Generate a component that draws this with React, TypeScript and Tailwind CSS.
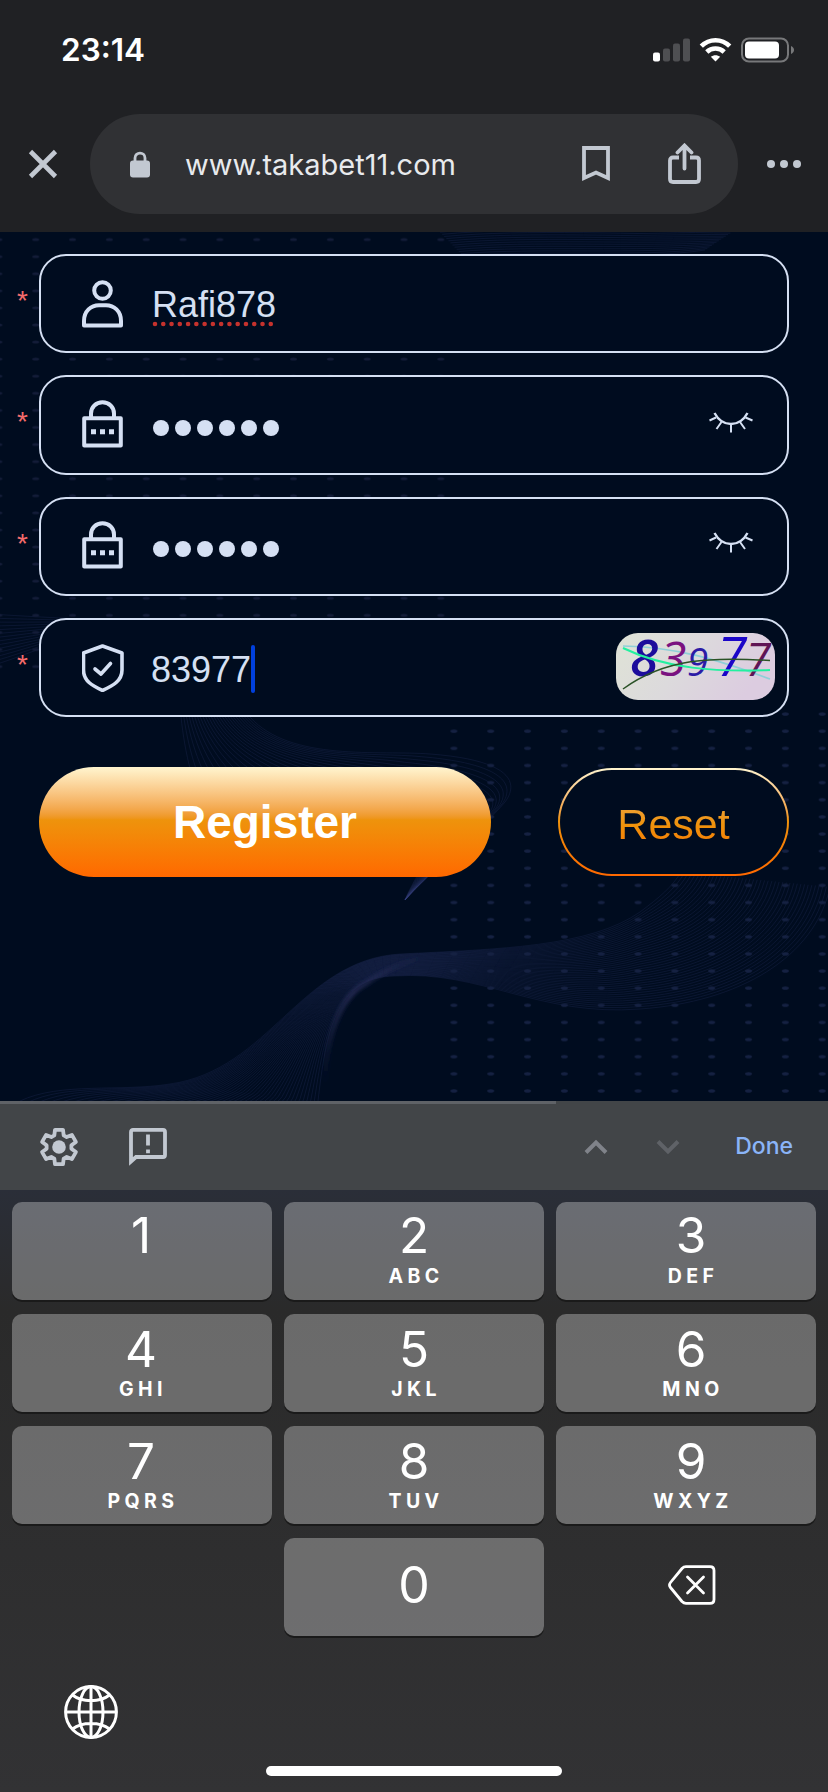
import React from "react";

interface Field {
  id: string;
  icon: React.ReactNode;
  value: React.ReactNode;
  trailing?: React.ReactNode;
  trailingClass?: string;
}

const UserIcon: React.FC = () => (
  <svg width="42" height="48" viewBox="0 0 42 48" fill="none" stroke="#d5e0f3" strokeWidth="4">
    <circle cx="20.5" cy="10.5" r="8.3" />
    <path d="M2 45.5V41C2 31 9 25.3 17 25.3H24C32 25.3 39 31 39 41V45.5Z" strokeLinejoin="round" />
  </svg>
);

const LockIcon: React.FC = () => (
  <svg
    className="-mt-[2px]"
    width="42"
    height="48"
    viewBox="0 0 42 48"
    fill="none"
    stroke="#d5e0f3"
    strokeWidth="4"
  >
    <path d="M9 17V13.5C9 7 14 2.3 20.5 2.3C27 2.3 32 7 32 13.5V17" />
    <path d="M2.2 18.3H38.8V45.5H2.2Z" strokeLinejoin="round" />
    <path d="M9 31.7H14M18 31.7H23M27 31.7H32" strokeWidth="5" />
  </svg>
);

const ShieldIcon: React.FC = () => (
  <svg
    width="42"
    height="48"
    viewBox="0 0 42 48"
    fill="none"
    stroke="#d5e0f3"
    strokeWidth="3.6"
    strokeLinecap="round"
    strokeLinejoin="round"
  >
    <path d="M20.5 2L40 9V26C40 37 31 41.5 20.5 46.5C10 41.5 1.5 37 1.5 26V9Z" />
    <path d="M13 25L19 30L28.5 19.5" />
  </svg>
);

const ClosedEyeIcon: React.FC = () => (
  <svg width="44" height="22" viewBox="0 0 44 22" fill="none" stroke="#d5e0f3" strokeWidth="2">
    <path d="M5.5 1C9 7.5 14.5 12 22 12C29.5 12 35 7.5 38.5 1" strokeWidth="2.4" />
    <path d="M7 5.5L0.5 8.5M12.5 10L7.5 17M22 12V20.5M31 10L36 17M36.5 5.5L43.5 8.5" />
  </svg>
);

const CaptchaImage: React.FC = () => (
  <svg className="overflow-visible" width="159" height="67" viewBox="0 0 159 67">
    <defs>
      <linearGradient id="captchaBg" x1="0" y1="0" x2="1" y2="0.3">
        <stop offset="0" stopColor="#dfe3d6" />
        <stop offset="0.5" stopColor="#dcdadc" />
        <stop offset="1" stopColor="#dccce0" />
      </linearGradient>
    </defs>
    <rect width="159" height="67" rx="22" fill="url(#captchaBg)" />
    <path d="M7 13C60 14 100 26 154 46" fill="none" stroke="#8fd0d8" strokeWidth="1.6" />
    <g fontFamily="'Open Sans', 'Noto Sans', sans-serif" fontStyle="italic">
      <text x="14" y="42.5" fontSize="51" fontWeight="600" fill="#1c0d9c">8</text>
      <text x="44" y="42.5" fontSize="48" fill="#7a1280">3</text>
      <text x="71" y="42.5" fontSize="38.5" fontWeight="500" fill="#2c1ba6">9</text>
      <text x="101" y="43" fontSize="54" fontWeight="500" fill="#1b05c8">7</text>
      <text x="129.500" y="43" fontSize="46" fontWeight="500" fill="#5f1455">7</text>
    </g>
    <path d="M7 15C50 36 100 39 154 37" fill="none" stroke="#23f0a0" strokeWidth="2" />
    <path d="M7 56C50 25 95 24 154 27.5" fill="none" stroke="#2a5226" strokeWidth="1.5" />
  </svg>
);

const MaskedValue: React.FC = () => (
  <span className="flex gap-[6px] pl-[1px] pt-[6px]">
    {[0, 1, 2, 3, 4, 5].map((i) => (
      <span key={i} className="h-4 w-4 rounded-full bg-[#d5e0f3]" />
    ))}
  </span>
);

const FIELDS: Field[] = [
  {
    id: "username",
    icon: <UserIcon />,
    value: (
      <span className="flex flex-col pt-[6px] text-[36px] leading-9">
        Rafi878
        <svg className="-mt-[2px]" width="122" height="6">
          <path
            d="M3 3H122"
            stroke="#c5322d"
            strokeWidth="4.6"
            strokeLinecap="round"
            strokeDasharray="0 8.27"
          />
        </svg>
      </span>
    ),
  },
  {
    id: "password",
    icon: <LockIcon />,
    value: <MaskedValue />,
    trailing: <ClosedEyeIcon />,
    trailingClass: "-mt-[3px]",
  },
  {
    id: "confirm",
    icon: <LockIcon />,
    value: <MaskedValue />,
    trailing: <ClosedEyeIcon />,
    trailingClass: "-mt-[6px]",
  },
  {
    id: "captcha",
    icon: <ShieldIcon />,
    value: (
      <span className="-ml-[1px] flex items-center pt-[2px] text-[36px] leading-[48px]">
        <span className="pt-[2px]">83977</span>
        <span className="h-12 w-1 rounded-sm bg-[#0040dd]" />
      </span>
    ),
    trailing: <CaptchaImage />,
    trailingClass: "-mt-[3px]",
  },
];

const KEYS = [
  ["1", ""],
  ["2", "ABC"],
  ["3", "DEF"],
  ["4", "GHI"],
  ["5", "JKL"],
  ["6", "MNO"],
  ["7", "PQRS"],
  ["8", "TUV"],
  ["9", "WXYZ"],
];

// Interpolates between two cubic paths to get a bundle of thin lines
const blend = (from: number[], to: number[], count: number): string[] =>
  Array.from({ length: count }, (_, i) => {
    const t = i / (count - 1);
    const p = from.map((v, k) => (v + (to[k] - v) * t).toFixed(1));
    let d = `M${p[0]} ${p[1]}`;
    for (let k = 2; k < p.length; k += 6) {
      d += `C${p.slice(k, k + 6).join(" ")}`;
    }
    return d;
  });

const WAVES: string[] = [
  ...blend(
    [20, 869, 60, 850, 120, 860, 170, 852, 270, 838, 300, 728, 400, 722, 500, 717, 590, 715, 640, 680, 660, 665, 672, 655, 681, 640],
    [306, 940, 310, 915, 314, 890, 318, 869, 326, 800, 335, 745, 395, 744, 480, 738, 540, 785, 640, 777, 740, 770, 815, 725, 830, 655],
    42
  ),
  ...blend(
    [181, 485, 185, 520, 192, 560, 215, 590, 290, 610, 440, 590, 430, 620, 420, 640, 410, 655, 405, 668],
    [250, 485, 290, 530, 380, 518, 430, 522, 510, 528, 520, 550, 505, 570, 480, 600, 430, 640, 405, 668],
    26
  ),
  ...blend(
    [438, -2, 520, -10, 640, -5, 735, -2],
    [465, 26, 540, 20, 640, 28, 705, 18],
    14
  ),
  ...blend(
    [-10, 382, 20, 384, 60, 386, 100, 388],
    [-10, 434, 20, 426, 50, 410, 100, 400],
    14
  ),
];

const PageBackground: React.FC = () => (
  <svg className="absolute inset-0" width="828" height="869" viewBox="0 0 828 869">
    <defs>
      <pattern id="dotsLeft" x="-19.5" y="-1" width="36.83" height="17.08" patternUnits="userSpaceOnUse">
        <ellipse cx="18.4" cy="8.5" rx="3.4" ry="1.5" fill="#131c38" />
      </pattern>
      <pattern id="dotsRight" x="435.5" y="473.5" width="36.83" height="17.13" patternUnits="userSpaceOnUse">
        <ellipse cx="18.4" cy="8.5" rx="3.4" ry="1.7" fill="#152142" />
      </pattern>
      <linearGradient id="crest" gradientUnits="userSpaceOnUse" x1="322" y1="850" x2="420" y2="720">
        <stop offset="0" stopColor="#2c3160" stopOpacity="0" />
        <stop offset="0.55" stopColor="#2c3160" />
        <stop offset="1" stopColor="#2c3160" stopOpacity="0" />
      </linearGradient>
      <filter id="soften" x="-20%" y="-20%" width="140%" height="140%">
        <feGaussianBlur stdDeviation="2" />
      </filter>
    </defs>
    <g fill="none" stroke="#39427c" strokeOpacity="0.2" strokeWidth="1">
      {WAVES.map((d, i) => (
        <path key={i} d={d} />
      ))}
    </g>
    <path
      d="M325 850C326 795 345 762 365 752C385 738 400 732 420 726"
      fill="none"
      stroke="url(#crest)"
      strokeWidth="4"
      filter="url(#soften)"
    />
    <rect width="450" height="440" fill="url(#dotsLeft)" />
    <rect x="436" y="474" width="392" height="395" fill="url(#dotsRight)" />
  </svg>
);

const StatusBar: React.FC = () => (
  <div className="flex h-[100px] items-center justify-between pl-[61px] pr-[34px] font-['Inter',sans-serif] text-white">
    <span className="text-[31.5px] font-semibold">23:14</span>
    <svg width="141" height="26" viewBox="0 0 141 26">
      <rect x="0" y="15.5" width="7" height="9" rx="2" fill="#fff" />
      <g fill="#4e4f52">
        <rect x="10" y="11.5" width="7" height="13" rx="2" />
        <rect x="20" y="6.5" width="7" height="18" rx="2" />
        <rect x="30" y="1.5" width="7" height="23" rx="2" />
      </g>
      <g fill="none" stroke="#fff" strokeWidth="4.6">
        <path d="M48.3 9.2C56.3 1.2 68.7 1.2 76.7 9.2" />
        <path d="M53.8 15C58.5 10.4 66.5 10.4 71.2 15" />
      </g>
      <path d="M62.5 24.5L57.8 19.8C60.5 17.6 64.5 17.6 67.2 19.8Z" fill="#fff" />
      <rect x="89" y="1.5" width="46" height="23" rx="7" fill="none" stroke="#77787a" strokeWidth="2" />
      <rect x="92" y="4.5" width="34" height="17" rx="4" fill="#fff" />
      <path d="M138 9C142 10.5 142 15.5 138 17Z" fill="#77787a" />
    </svg>
  </div>
);

const BrowserBar: React.FC = () => (
  <div className="flex items-center pl-7 pt-[14px]">
    <svg className="shrink-0" width="30" height="30" viewBox="0 0 30 30" stroke="#c2c8d1" strokeWidth="4.6">
      <path d="M2.5 2.5L27.5 27.5M27.5 2.5L2.5 27.5" />
    </svg>
    <div className="ml-8 flex h-[100px] w-[648px] shrink-0 items-center rounded-full bg-[#303134] pl-10 pr-[37px]">
      <svg width="20" height="27" viewBox="0 0 20 27">
        <path d="M5 11V7C5 0.5 15 0.5 15 7V11" fill="none" stroke="#c2c8d1" strokeWidth="2.8" />
        <rect y="9.5" width="20" height="17" rx="3" fill="#c2c8d1" />
      </svg>
      <span className="ml-[35px] grow pt-[2px] font-['Inter',sans-serif] text-[29px] text-[#e8eaed]">
        www.takabet11.com
      </span>
      <svg width="28" height="36" viewBox="0 0 28 36" fill="none" stroke="#c2c8d1" strokeWidth="3.8">
        <path d="M2 2H26V32L14 26.5L2 32Z" />
      </svg>
      <svg
        className="ml-[58px]"
        width="33"
        height="42"
        viewBox="0 0 33 42"
        fill="none"
        stroke="#c2c8d1"
        strokeWidth="3.8"
      >
        <path d="M11 14.5H5C3 14.5 2 15.5 2 17.5V36C2 38 3 39 5 39H28C30 39 31 38 31 36V17.5C31 15.5 30 14.5 28 14.5H22" />
        <path d="M16.5 25.5V3.5M9.5 9.5L16.5 2.5L23.5 9.5" strokeLinecap="round" />
      </svg>
    </div>
    <svg className="ml-7 shrink-0" width="36" height="10" viewBox="0 0 36 10" fill="#c2c8d1">
      <circle cx="5" cy="5" r="4" />
      <circle cx="18" cy="5" r="4" />
      <circle cx="31" cy="5" r="4" />
    </svg>
  </div>
);

const FieldRow: React.FC<{ field: Field }> = ({ field }) => (
  <div className="flex h-[99.3px] items-stretch">
    <span className="w-[39px] pl-[17px] pt-[28px] text-[28px] leading-[38px] text-[#f56c6c]">
      *
    </span>
    <div
      className={`flex grow items-center rounded-[27px] border-2 border-[#d5e0f3] bg-[#000c1f] pl-[41px] ${
        field.id === "captcha" ? "pr-3" : "pr-[34px]"
      }`}
    >
      {field.icon}
      <div className="ml-[28px] grow text-[#d5e0f3]">{field.value}</div>
      {field.trailing && <div className={field.trailingClass}>{field.trailing}</div>}
    </div>
  </div>
);

const RegisterForm: React.FC = () => (
  <main className="relative h-[869px] overflow-hidden bg-[#000c1f] font-['Liberation_Sans',Arial,sans-serif]">
    <PageBackground />
    <div className="relative pr-[39px] pt-[22px]">
      <div className="flex flex-col gap-[22px]">
        {FIELDS.map((field) => (
          <FieldRow key={field.id} field={field} />
        ))}
      </div>
      <div className="mt-[50px] flex items-center justify-between pl-[39px]">
        <button className="h-[110px] w-[452px] rounded-full bg-linear-to-b from-[#fff5cf] via-[#ee930c] via-48% to-[#ff6800] text-[46px] font-bold text-white">
          Register
        </button>
        <div className="h-[108px] w-[231px] rounded-full bg-linear-to-b from-[#fff5cf] via-[#ee930c] via-48% to-[#ff6800] p-[2px]">
          <button className="h-full w-full rounded-full bg-[#000c1f] pt-1 text-[43px]">
            <span className="bg-linear-to-b from-[#f0a63a] via-[#ee930c] via-50% to-[#f87a05] bg-clip-text text-transparent">
              Reset
            </span>
          </button>
        </div>
      </div>
    </div>
  </main>
);

const Toolbar: React.FC = () => (
  <div className="h-[89px] bg-[#424548]">
    <div className="h-[3px] w-[556px] bg-[#5f6267]" />
    <div className="flex h-[86px] items-center pl-[39px] pr-[35px]">
      <svg width="40" height="40" viewBox="0 0 40 40" fill="none" stroke="#c2c8d1">
        <path
          d="M16 2.8H24L24.7 8.4L27.7 10.1L32.9 7.9L36.9 14.9L32.4 18.3V21.7L36.9 25.1L32.9 32.1L27.7 29.9L24.7 31.6L24 37.2H16L15.3 31.6L12.3 29.9L7.1 32.1L3.1 25.1L7.6 21.7V18.3L3.1 14.9L7.1 7.9L12.3 10.1L15.3 8.4Z"
          strokeWidth="3.8"
          strokeLinejoin="round"
        />
        <circle cx="20" cy="20" r="6.8" fill="#c2c8d1" stroke="none" />
      </svg>
      <svg className="ml-[49px]" width="40" height="40" viewBox="0 0 40 40" fill="none" stroke="#c2c8d1" strokeWidth="3.8">
        <path d="M3 34.5V5C3 3.5 4 2.8 5 2.8H35C36 2.8 37 3.5 37 5V28C37 29.5 36 30 35 30H8Z" />
        <path d="M20 7.5V18.5M20 22.5V26.3" />
      </svg>
      <div className="grow" />
      <svg width="24" height="16" viewBox="0 0 24 16" fill="none" stroke="#80838a" strokeWidth="4">
        <path d="M2 13.5L12 3.5L22 13.5" />
      </svg>
      <svg className="ml-12" width="24" height="16" viewBox="0 0 24 16" fill="none" stroke="#5f6267" strokeWidth="4">
        <path d="M2 2.5L12 12.5L22 2.5" />
      </svg>
      <span className="-mt-[2px] ml-[55px] font-['Inter',sans-serif] text-[23px] font-medium text-[#8ab4f8]">
        Done
      </span>
    </div>
  </div>
);

const BackspaceIcon: React.FC = () => (
  <svg
    width="48"
    height="40"
    viewBox="0 0 48 40"
    fill="none"
    stroke="#fff"
    strokeWidth="2.8"
    strokeLinecap="round"
    strokeLinejoin="round"
  >
    <path d="M18 1.6H42C44.5 1.6 46 3 46 5.5V34.5C46 37 44.5 38.4 42 38.4H18C16 38.4 15 37.5 14 36.5L2.5 22.5C1.3 21 1.3 19 2.5 17.5L14 3.5C15 2.4 16 1.6 18 1.6Z" />
    <path d="M19.5 12L35.5 28M35.5 12L19.5 28" />
  </svg>
);

const GlobeIcon: React.FC = () => (
  <svg width="54" height="54" viewBox="0 0 54 54" fill="none" stroke="#fff" strokeWidth="3">
    <circle cx="27" cy="27" r="25.4" />
    <ellipse cx="27" cy="27" rx="12" ry="25.4" />
    <path d="M27 2V52M2 27H52M8.5 10C18 17.5 36 17.5 45.5 10M8.5 44C18 36.5 36 36.5 45.5 44" />
  </svg>
);

const keyStyle =
  "flex h-[98px] flex-col items-center rounded-[10px] bg-white/[0.3] shadow-[0_2px_0_#1a1a1a]";

const Keyboard: React.FC = () => (
  <div className="flex h-[602px] flex-col bg-linear-to-b from-[#2a2e38] via-[#2a2a2a] via-20% to-[#323234] px-3 pt-3 font-['Inter',sans-serif] text-white">
    <div className="grid grid-cols-3 gap-x-3 gap-y-[14px]">
      {KEYS.map(([digit, letters], i) => (
        <div
          key={digit}
          className={`${keyStyle} ${i % 3 === 2 ? "pl-[10px]" : i % 3 === 0 ? "pr-[2px]" : ""}`}
        >
          <span
            className={`text-[49.5px] leading-[54px] ${i < 3 ? "mt-[6px]" : "mt-[8px]"}`}
          >
            {digit}
          </span>
          <span
            className={`-mr-1 text-[19.5px] font-bold leading-[26px] tracking-[4.4px] ${
              i < 3 ? "mt-[1px]" : ""
            }`}
          >
            {letters}
          </span>
        </div>
      ))}
      <div />
      <div className={`${keyStyle} justify-center`}>
        <span className="-mt-1 text-[50px] leading-[54px]">0</span>
      </div>
      <div className="flex items-center justify-center pb-1 pl-[12px]">
        <BackspaceIcon />
      </div>
    </div>
    <div className="mt-[49px] pl-[52px]">
      <GlobeIcon />
    </div>
    <div className="mx-auto mb-4 mt-auto h-[10px] w-[296px] rounded-full bg-white" />
  </div>
);

export default function App() {
  return (
    <div className="w-[828px] overflow-hidden">
      <header className="h-[232px] bg-[#202124]">
        <StatusBar />
        <BrowserBar />
      </header>
      <RegisterForm />
      <Toolbar />
      <Keyboard />
    </div>
  );
}
